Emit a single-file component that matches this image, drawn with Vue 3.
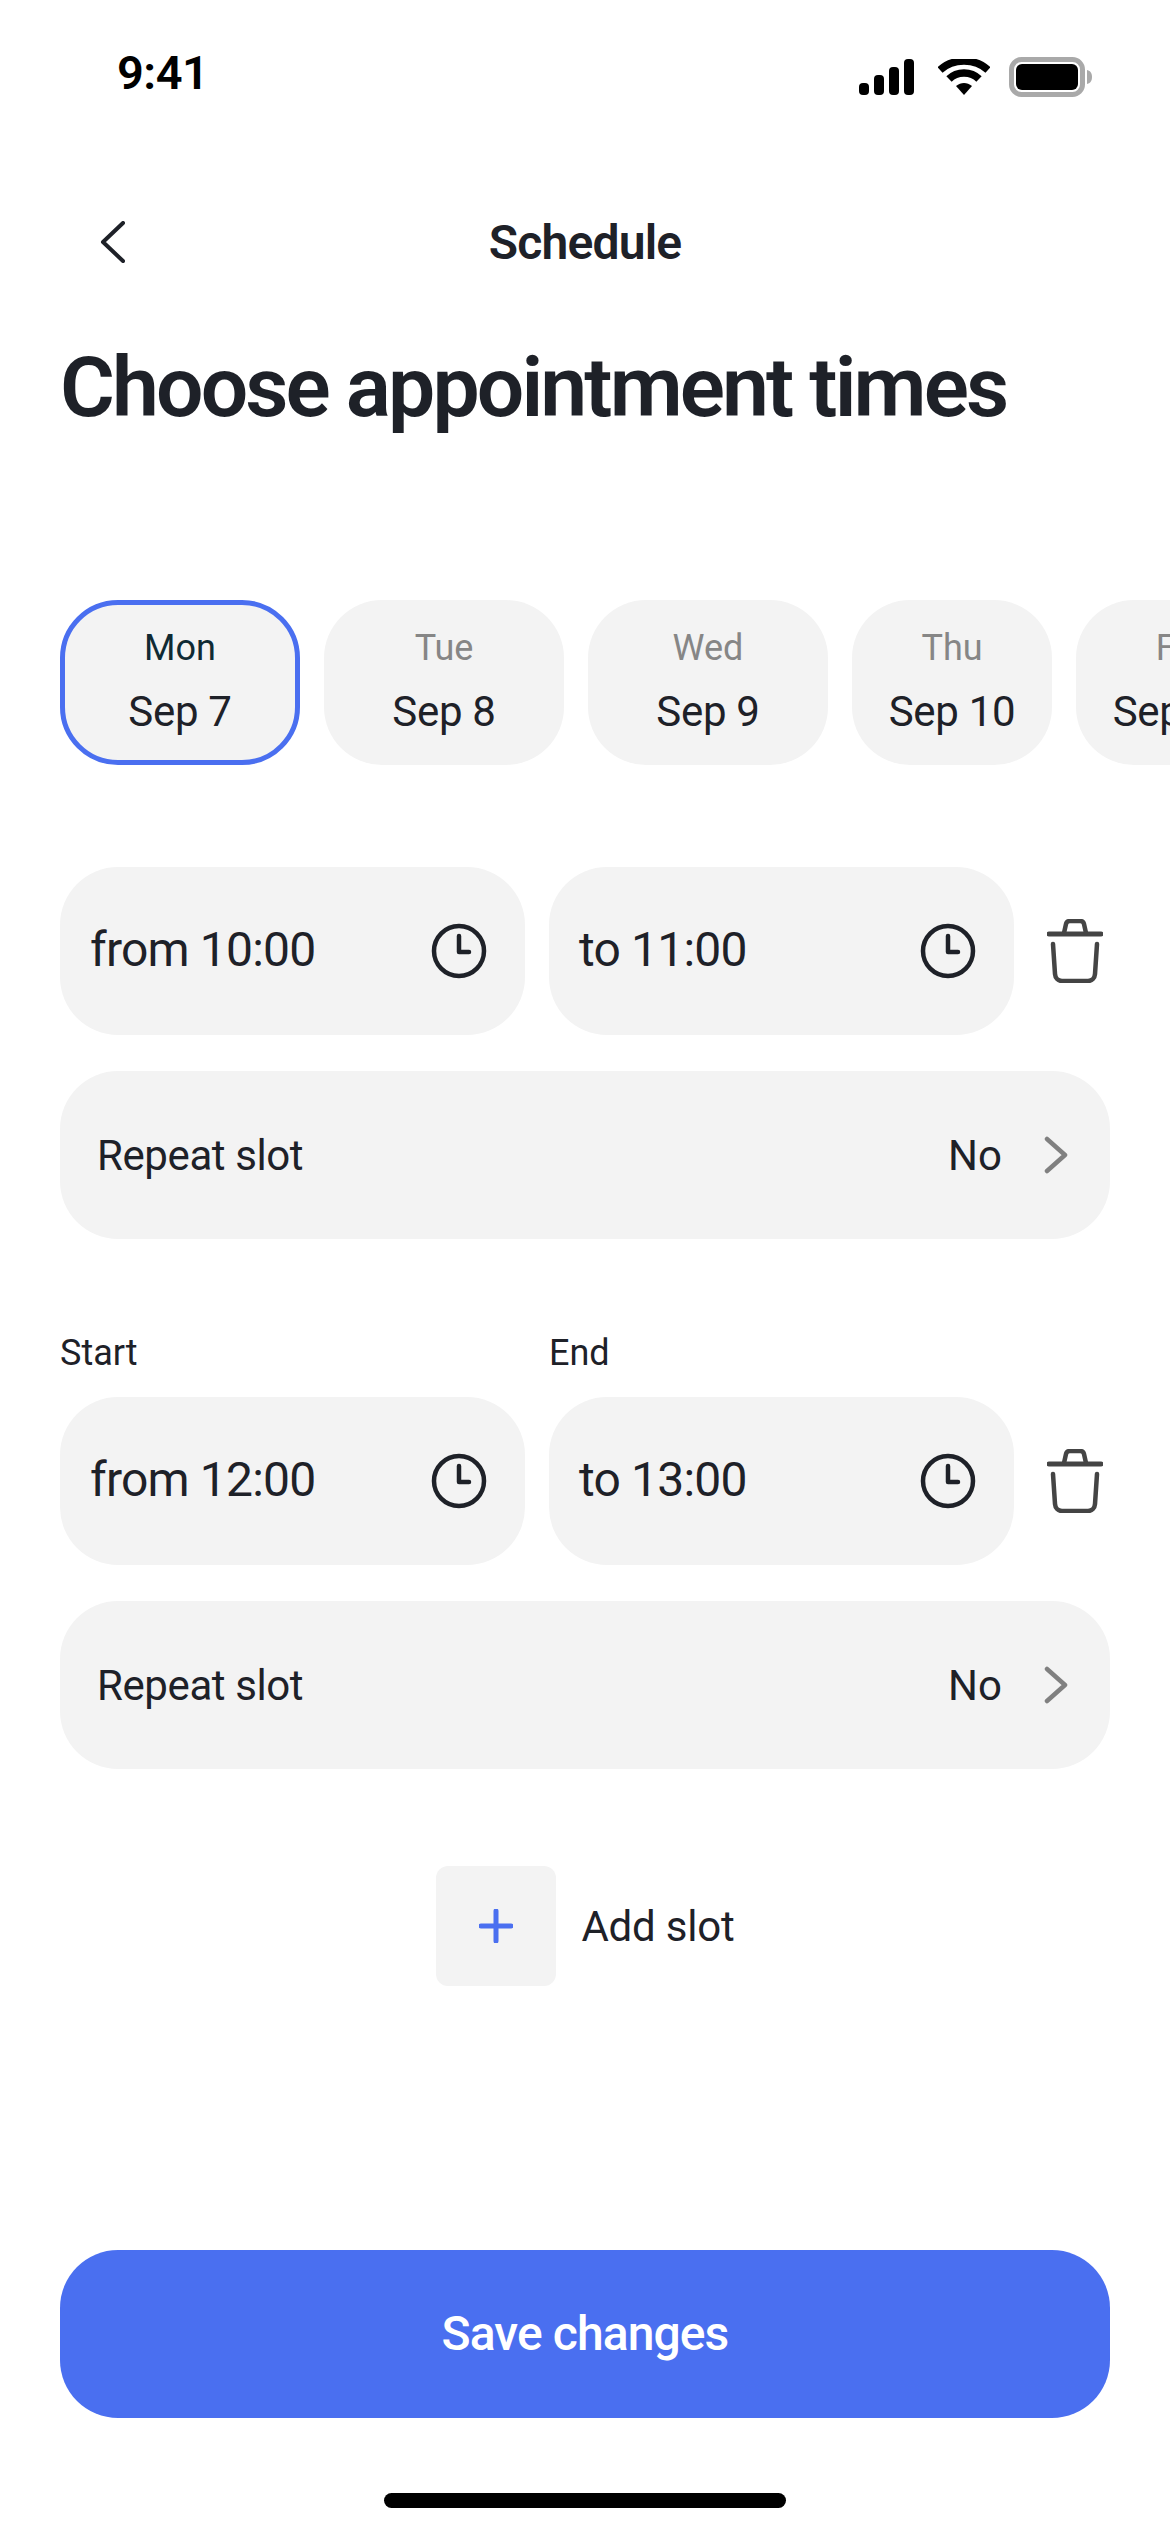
<script setup>
const days = [
  { day: 'Mon', date: 'Sep 7', width: 240, active: true },
  { day: 'Tue', date: 'Sep 8', width: 240 },
  { day: 'Wed', date: 'Sep 9', width: 240 },
  { day: 'Thu', date: 'Sep 10', width: 200 },
  { day: 'Fri', date: 'Sep 11', width: 200 }
]

const slots = [
  { from: 'from 10:00', to: 'to 11:00', labels: false },
  { from: 'from 12:00', to: 'to 13:00', labels: true }
]
</script>

<template>
  <div class="screen">
    <div class="status">
      <span class="clock-time">9:41</span>
      <div class="status-icons">
        <svg width="56" height="36" viewBox="0 0 56 36">
          <rect x="0" y="24" width="10" height="12" rx="4" />
          <rect x="15" y="16" width="10" height="20" rx="4" />
          <rect x="30" y="8" width="10" height="28" rx="4" />
          <rect x="45" y="0" width="10" height="36" rx="4" />
        </svg>
        <svg width="52" height="36" viewBox="0 0 52 36">
          <path d="M2 11 C15 -1 37 -1 50 11" fill="none" stroke="#000" stroke-width="7.5" />
          <path d="M11 20 C19 12 33 12 41 20" fill="none" stroke="#000" stroke-width="7.5" />
          <path d="M18 27 C23 23 29 23 34 27 L26 36 Z" />
        </svg>
        <svg class="battery" width="84" height="40" viewBox="0 0 84 40">
          <rect x="2.5" y="2.5" width="71" height="35" rx="10" fill="none" stroke="#a9a9a9" stroke-width="5" />
          <rect x="7" y="7" width="62" height="26" rx="6" />
          <path d="M78 13 C82 14 83 17 83 20 C83 23 82 26 78 27 Z" fill="#a9a9a9" />
        </svg>
      </div>
    </div>

    <div class="nav">
      <svg class="back" width="26" height="42" viewBox="0 0 26 42">
        <path d="M23 2 L3 21 L23 40" fill="none" stroke="#1e2128" stroke-width="4" stroke-linecap="round" stroke-linejoin="round" />
      </svg>
      <span class="nav-title">Schedule</span>
    </div>

    <h1 class="heading">Choose appointment times</h1>

    <div class="days">
      <div
        v-for="d in days"
        :key="d.day"
        class="day"
        :class="{ active: d.active }"
        :style="{ width: d.width + 'px' }"
      >
        <span class="day-name">{{ d.day }}</span>
        <span class="day-date">{{ d.date }}</span>
      </div>
    </div>

    <div class="slots">
      <div v-for="s in slots" :key="s.from" class="slot" :class="{ labelled: s.labels }">
        <div v-if="s.labels" class="labels">
          <span>Start</span>
          <span>End</span>
        </div>
        <div class="times">
          <div v-for="t in [s.from, s.to]" :key="t" class="field">
            <span class="field-text">{{ t }}</span>
            <svg width="56" height="56" viewBox="0 0 56 56" fill="none" stroke="#1e2128" stroke-width="4.5" stroke-linecap="round" stroke-linejoin="round">
              <circle cx="28" cy="28" r="25" />
              <path d="M28 13 V29 H38" />
            </svg>
          </div>
          <svg class="trash" width="56" height="64" viewBox="0 0 56 64" fill="none" stroke="#444" stroke-width="4.5" stroke-linecap="round" stroke-linejoin="round">
            <path d="M2 15 H54" stroke-width="5" />
            <path d="M17 14 L19 5 C19.500 3 21 2 23 2 H33 C35 2 36.500 3 37 5 L39 14" />
            <path d="M6 25 L8 55 C8.300 59 11 62 15 62 H41 C45 62 47.700 59 48 55 L50 25" />
          </svg>
        </div>
        <div class="repeat">
          <span class="repeat-label">Repeat slot</span>
          <div class="repeat-value">
            <span>No</span>
            <svg width="24" height="38" viewBox="0 0 24 38" fill="none" stroke="#808080" stroke-width="4.500" stroke-linecap="round" stroke-linejoin="round">
              <path d="M3 3 L21 19 L3 35" />
            </svg>
          </div>
        </div>
      </div>
    </div>

    <div class="add">
      <div class="add-box">
        <svg width="34" height="34" viewBox="0 0 34 34" stroke="#4a6ff0" stroke-width="5" stroke-linecap="round">
          <path d="M17 2 V32 M2 17 H32" />
        </svg>
      </div>
      <span class="add-label">Add slot</span>
    </div>

    <button class="save">Save changes</button>
    <div class="home-bar"></div>
  </div>
</template>

<style>
html,
body {
  margin: 0;
  background: #fff;
}
</style>

<style scoped>
.screen {
  width: 1170px;
  height: 2532px;
  overflow: hidden;
  display: flex;
  flex-direction: column;
  background: #fff;
  color: #1e2128;
  font-family: Roboto, "Liberation Sans", sans-serif;
}

.status {
  height: 58px;
  padding: 43px 77px 0 117px;
  display: flex;
  justify-content: space-between;
  align-items: center;
}

.clock-time {
  font-size: 47px;
  font-weight: 600;
  color: #000;
  letter-spacing: -0.5px;
}

.status-icons {
  display: flex;
  align-items: center;
  gap: 23px;
  margin-top: 10px;
}

.status-icons svg {
  display: block;
}

.battery {
  margin-left: -4px;
}

.nav {
  position: relative;
  height: 62px;
  margin-top: 110px;
  display: flex;
  justify-content: center;
  align-items: center;
}

.back {
  position: absolute;
  left: 100px;
  top: 10px;
}

.nav-title {
  font-size: 48px;
  font-weight: 600;
  letter-spacing: -0.8px;
}

.heading {
  margin: 65px 0 0;
  padding-left: 60px;
  font-size: 84px;
  line-height: 100px;
  font-weight: 600;
  letter-spacing: -2.9px;
  white-space: nowrap;
}

.days {
  display: flex;
  gap: 24px;
  margin-top: 162px;
  padding-left: 60px;
}

.day {
  flex: none;
  box-sizing: border-box;
  height: 165px;
  padding-bottom: 5px;
  border-radius: 58px;
  background: #f3f3f3;
  display: flex;
  flex-direction: column;
  align-items: center;
  justify-content: center;
  gap: 14px;
}

.day.active {
  border: 5px solid #4a6ff0;
}

.day-name {
  font-size: 36px;
  line-height: 50px;
  color: #868686;
}

.active .day-name {
  color: #0f2a33;
}

.day-date {
  font-size: 42px;
  line-height: 50px;
  letter-spacing: -0.3px;
}

.slots {
  margin-top: 102px;
  padding: 0 60px;
  display: flex;
  flex-direction: column;
  gap: 84px;
}

.slot {
  display: flex;
  flex-direction: column;
  gap: 36px;
}

.labelled {
  margin-top: 8px;
}

.labels {
  display: flex;
  margin-bottom: -14px;
  font-size: 36px;
  line-height: 44px;
}

.labels span {
  width: 489px;
}

.times {
  display: flex;
  align-items: center;
  gap: 24px;
}

.field {
  box-sizing: border-box;
  width: 465px;
  height: 168px;
  padding: 0 38px 0 30px;
  border-radius: 58px;
  background: #f3f3f3;
  display: flex;
  align-items: center;
  justify-content: space-between;
  font-size: 48px;
  letter-spacing: -0.8px;
}

.field-text {
  margin-bottom: 3px;
}

.trash {
  margin-left: 9px;
}

.repeat {
  box-sizing: border-box;
  height: 168px;
  padding: 0 42px 0 37px;
  border-radius: 58px;
  background: #f3f3f3;
  display: flex;
  align-items: center;
  justify-content: space-between;
  font-size: 42px;
}

.repeat-label {
  letter-spacing: -0.4px;
}

.repeat-value {
  display: flex;
  align-items: center;
  gap: 42px;
}

.add {
  margin-top: 97px;
  display: flex;
  align-items: center;
  justify-content: center;
  gap: 25px;
  padding-left: 1px;
  font-size: 42px;
}

.add-label {
  letter-spacing: -0.2px;
}

.add-box {
  width: 120px;
  height: 120px;
  border-radius: 12px;
  background: #f3f3f3;
  display: flex;
  align-items: center;
  justify-content: center;
}

.save {
  margin: 264px 60px 0;
  height: 168px;
  padding-bottom: 3px;
  border: none;
  border-radius: 58px;
  background: #4a6ff0;
  color: #fff;
  font-family: inherit;
  font-size: 48px;
  font-weight: 500;
  letter-spacing: -0.9px;
}

.home-bar {
  width: 402px;
  height: 15px;
  margin: 75px auto 0;
  border-radius: 8px;
  background: #000;
}
</style>
